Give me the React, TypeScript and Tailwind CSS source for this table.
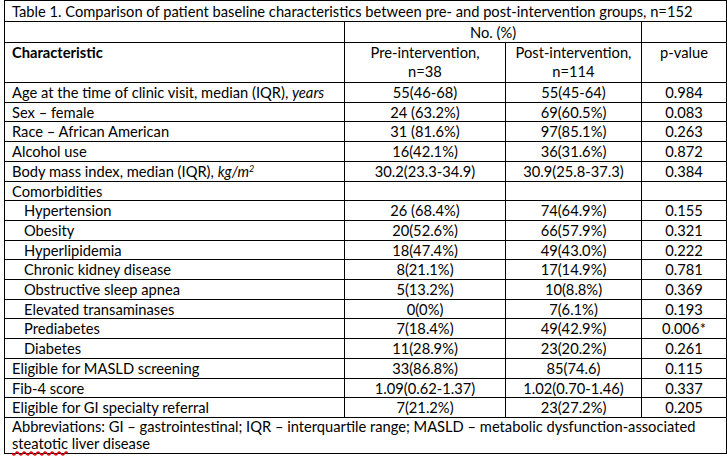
import React from 'react';

type Row = { label: React.ReactNode; pre: string; post: string; p: string; sub?: boolean };

const rows: Row[] = [
  { label: <>Age at the time of clinic visit, median (IQR), <i>years</i></>, pre: '55(46-68)', post: '55(45-64)', p: '0.984' },
  { label: 'Sex – female', pre: '24 (63.2%)', post: '69(60.5%)', p: '0.083' },
  { label: 'Race – African American', pre: '31 (81.6%)', post: '97(85.1%)', p: '0.263' },
  { label: 'Alcohol use', pre: '16(42.1%)', post: '36(31.6%)', p: '0.872' },
  { label: <>Body mass index, median (IQR), <i>kg/m<sup className="text-[9px]">2</sup></i></>, pre: '30.2(23.3-34.9)', post: '30.9(25.8-37.3)', p: '0.384' },
  { label: 'Comorbidities', pre: '', post: '', p: '' },
  { label: 'Hypertension', pre: '26 (68.4%)', post: '74(64.9%)', p: '0.155', sub: true },
  { label: 'Obesity', pre: '20(52.6%)', post: '66(57.9%)', p: '0.321', sub: true },
  { label: 'Hyperlipidemia', pre: '18(47.4%)', post: '49(43.0%)', p: '0.222', sub: true },
  { label: 'Chronic kidney disease', pre: '8(21.1%)', post: '17(14.9%)', p: '0.781', sub: true },
  { label: 'Obstructive sleep apnea', pre: '5(13.2%)', post: '10(8.8%)', p: '0.369', sub: true },
  { label: 'Elevated transaminases', pre: '0(0%)', post: '7(6.1%)', p: '0.193', sub: true },
  { label: 'Prediabetes', pre: '7(18.4%)', post: '49(42.9%)', p: '0.006*', sub: true },
  { label: 'Diabetes', pre: '11(28.9%)', post: '23(20.2%)', p: '0.261', sub: true },
  { label: 'Eligible for MASLD screening', pre: '33(86.8%)', post: '85(74.6)', p: '0.115' },
  { label: 'Fib-4 score', pre: '1.09(0.62-1.37)', post: '1.02(0.70-1.46)', p: '0.337' },
  { label: 'Eligible for GI specialty referral', pre: '7(21.2%)', post: '23(27.2%)', p: '0.205' },
];

const App = () => {
  return (
    <div className="w-[727px] h-[456px] bg-white text-black overflow-hidden" style={{ fontFamily: 'Lato, "Open Sans", sans-serif' }}>
      <table className="ml-[4px] w-[722px] table-fixed border-collapse text-[14.7px] leading-[18.7px]">
        <colgroup>
          <col className="w-[340px]" />
          <col className="w-[161px]" />
          <col className="w-[136px]" />
          <col className="w-[85px]" />
        </colgroup>
        <tbody>
          <tr>
            <td colSpan={4} className="border border-black px-[7px] h-[21px]">
              Table 1. Comparison of patient baseline characteristics between pre- and post-intervention groups, n=152
            </td>
          </tr>
          <tr>
            <td className="border border-black h-[21px]"></td>
            <td colSpan={2} className="border border-black text-center">No. (%)</td>
            <td className="border border-black"></td>
          </tr>
          <tr>
            <td className="border border-black px-[7px] align-top font-bold h-[40px]">Characteristic</td>
            <td className="border border-black text-center align-top">Pre-intervention,<br />n=38</td>
            <td className="border border-black text-center align-top">Post-intervention,<br />n=114</td>
            <td className="border border-black text-center align-top">p-value</td>
          </tr>
          {rows.map((r, i) => (
            <tr key={i}>
              <td className={`border border-black pr-[7px] ${r.sub ? 'pl-[19px]' : 'pl-[7px]'}`}>{r.label}</td>
              <td className="border border-black text-center">{r.pre}</td>
              <td className="border border-black text-center">{r.post}</td>
              <td className="border border-black text-center">{r.p}</td>
            </tr>
          ))}
          <tr>
            <td colSpan={4} className="border border-black px-[7px] align-top h-[35px] leading-[17.5px]">
              Abbreviations: GI – gastrointestinal; IQR – interquartile range; MASLD – metabolic dysfunction-associated
              <br />
              <span className="underline decoration-wavy decoration-red-600 underline-offset-[1px]">steatotic</span> liver disease
            </td>
          </tr>
        </tbody>
      </table>
    </div>
  );
};

export default App;
